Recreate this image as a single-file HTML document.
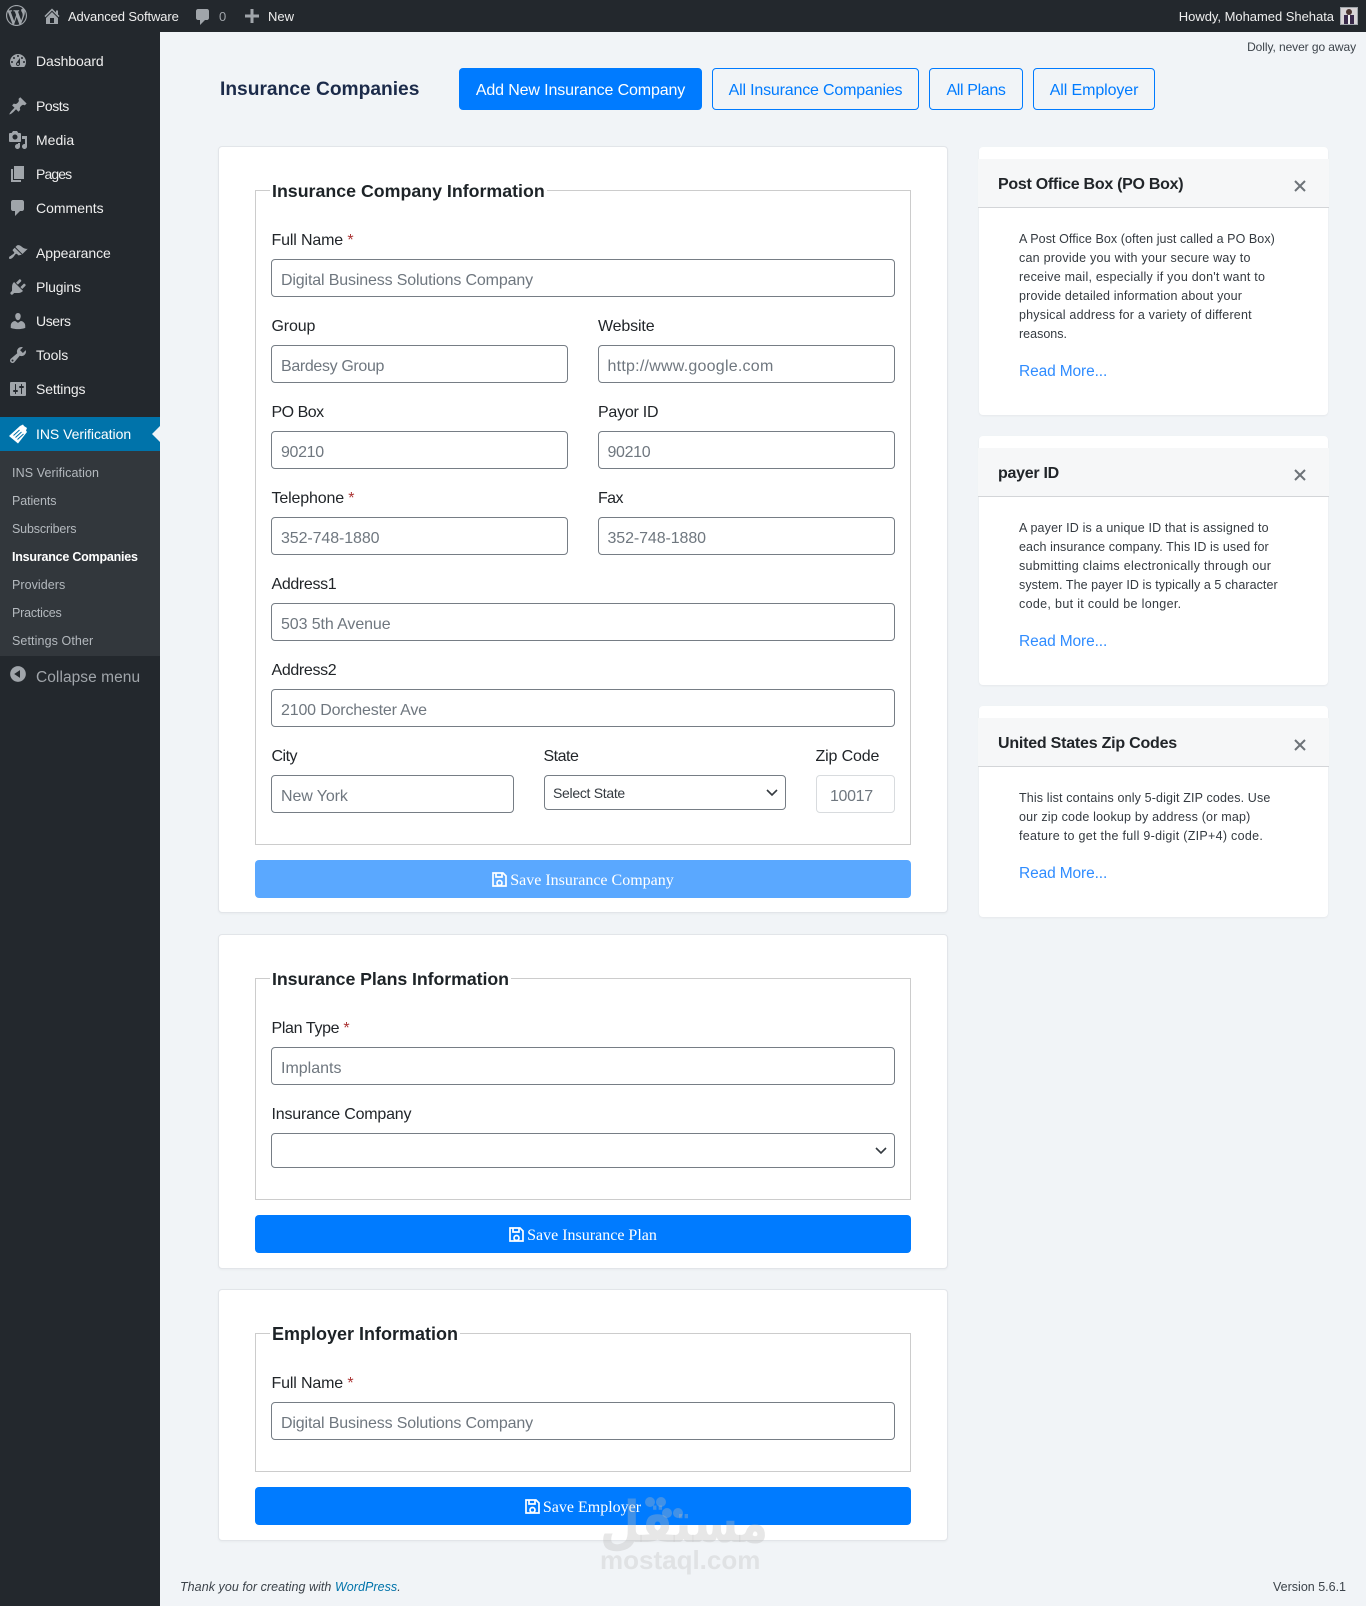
<!DOCTYPE html>
<html lang="en"><head><meta charset="utf-8"><title>Insurance Companies</title>
<style>
html,body{margin:0;padding:0}
body{width:1366px;height:1606px;position:relative;overflow:hidden;background:#f1f4f7;font-family:"Liberation Sans",sans-serif;color:#212529}
.a{position:absolute}
.t{position:absolute;white-space:nowrap;line-height:20px;height:20px}
.ic{position:absolute;fill:#a0a5aa}
.m{color:#eee;font-size:14px;left:36px}
.s{color:#b4b9be;font-size:12.5px;left:12px;letter-spacing:.05px}
.card{position:absolute;background:#fff;border:1px solid #e2e5e9;border-radius:4px;box-sizing:border-box;box-shadow:0 1px 2px rgba(0,0,0,.04)}
.fs{position:absolute;border:1px solid #ccc;box-sizing:border-box;left:255px;width:656px}
.lg{font-weight:bold;font-size:17.8px;color:#1d2327;background:#fff;padding:0 2px;left:270px;margin-top:1px}
.l{font-size:16px;color:#212529;margin-top:2px;margin-left:-.5px;letter-spacing:-.15px}
.i{position:absolute;box-sizing:border-box;height:38px;border:1px solid #767d85;border-radius:4px;background:#fff;color:#6f777f;font-size:16px;line-height:41px;padding-left:9px;white-space:nowrap;letter-spacing:-.15px}
.r{color:#a33}
.b{position:absolute;box-sizing:border-box;left:255px;width:656px;height:38px;background:#007bff;border-radius:4px;color:#fff;font:16px/41px "Liberation Serif",serif;text-align:center}
.b svg{vertical-align:-2px;fill:none;stroke:#fff;margin-right:3px}
.ob{position:absolute;box-sizing:border-box;height:42px;top:68px;border:1px solid #007bff;border-radius:4px;color:#007bff;font-size:16px;line-height:43px;text-align:center;white-space:nowrap}
.side{position:absolute;left:979px;width:349px;background:#fff;border-radius:4px;box-shadow:0 1px 2px rgba(0,0,0,.05)}
.hd{position:absolute;left:-1px;width:351px;background:#f6f7f8;border-bottom:1px solid #d3d5d8;box-sizing:border-box}
.h{font-weight:bold;font-size:16px;color:#212529;left:998px;margin-top:1px;letter-spacing:-.28px}
.p{font-size:12.5px;color:#343a40;left:1019px}
.rm{font-size:15.5px;color:#2f8cff;left:1019px;margin-top:1px;letter-spacing:-.12px}
.x{position:absolute;left:1294px;width:12px;height:12px;stroke:#6d7378;stroke-width:2;fill:none}
</style></head><body>

<!-- admin bar -->
<div class="a" style="left:0;top:0;width:1366px;height:32px;background:#23282d"></div>
<svg class="ic" style="left:6px;top:5px" width="21" height="21" viewBox="0 0 20 20"><path d="M20 10c0-5.51-4.49-10-10-10C4.48 0 0 4.49 0 10c0 5.52 4.48 10 10 10 5.51 0 10-4.48 10-10zM7.78 15.37L4.37 6.22c.55-.02 1.17-.08 1.17-.08.5-.06.44-1.13-.06-1.11 0 0-1.45.11-2.37.11-.18 0-.37 0-.58-.01C4.12 2.69 6.87 1.11 10 1.11c2.33 0 4.45.87 6.05 2.34-.68-.11-1.65.39-1.65 1.58 0 .74.45 1.36.9 2.1.35.61.55 1.36.55 2.46 0 1.49-1.4 5-1.4 5l-3.03-8.37c.54-.02.82-.17.82-.17.5-.05.44-1.25-.06-1.22 0 0-1.44.12-2.38.12-.87 0-2.33-.12-2.33-.12-.5-.03-.56 1.2-.06 1.22l.92.08 1.26 3.41zM17.41 10c.24-.64.74-1.87.43-4.25.7 1.29 1.05 2.71 1.05 4.25 0 3.29-1.73 6.24-4.4 7.78.97-2.59 1.94-5.2 2.92-7.78zM6.1 18.09C3.12 16.65 1.11 13.53 1.11 10c0-1.3.23-2.48.72-3.59C3.25 10.3 4.67 14.2 6.1 18.09zm4.03-6.63l2.58 6.98c-.86.29-1.76.45-2.71.45-.79 0-1.57-.11-2.29-.33.81-2.38 1.62-4.74 2.42-7.1z"/></svg>
<svg class="ic" style="left:42px;top:6px" width="20" height="20" viewBox="0 0 20 20"><path d="M16 8.5l1.53 1.53-1.06 1.06L10 4.62l-6.47 6.47-1.06-1.06L10 2.5l4 4v-2h2v4zm-6-2.46l6 5.99V18H4v-5.97zM12 17v-5H8v5h4z"/></svg>
<div class="t" style="left:68px;top:7px;font-size:13px;color:#eee;letter-spacing:-.12px">Advanced Software</div>
<svg class="ic" style="left:193px;top:7px" width="20" height="20" viewBox="0 0 20 20"><path d="M5 2h9c1.1 0 2 .9 2 2v7c0 1.1-.9 2-2 2h-2l-5 5v-5H5c-1.1 0-2-.9-2-2V4c0-1.1.9-2 2-2z"/></svg>
<div class="t" style="left:219px;top:7px;font-size:13px;color:#a0a5aa">0</div>
<svg class="ic" style="left:242px;top:6px" width="20" height="20" viewBox="0 0 20 20"><path d="M17 8.5v3h-5.5V17h-3v-5.5H3v-3h5.5V3h3v5.5z"/></svg>
<div class="t" style="left:268px;top:7px;font-size:13px;color:#eee">New</div>
<div class="t" style="right:32px;top:7px;font-size:13px;color:#eee;letter-spacing:-.03px">Howdy, Mohamed Shehata</div>
<div class="a" style="left:1340px;top:7px;width:16px;height:16px;border:1px solid #a0a5aa;background:#d8d4d6"><div class="a" style="left:5px;top:1px;width:6px;height:6px;background:#4a3530;border-radius:3px"></div><div class="a" style="left:3px;top:7px;width:10px;height:9px;background:#3a2a4a"></div><div class="a" style="left:7px;top:7px;width:2px;height:9px;background:#eee"></div></div>

<!-- sidebar -->
<div class="a" style="left:0;top:32px;width:160px;height:1574px;background:#23282d"></div>
<svg class="ic" style="left:8px;top:51px" width="20" height="20" viewBox="0 0 20 20"><path d="M3.76 16h12.48c1.1-1.37 1.76-3.11 1.76-5 0-4.42-3.58-8-8-8s-8 3.58-8 8c0 1.89.66 3.63 1.76 5zM10 4c.55 0 1 .45 1 1s-.45 1-1 1-1-.45-1-1 .45-1 1-1zM6 6c.55 0 1 .45 1 1s-.45 1-1 1-1-.45-1-1 .45-1 1-1zm8 0c.55 0 1 .45 1 1s-.45 1-1 1-1-.45-1-1 .45-1 1-1zm-5.37 5.55L12 7v6c0 1.1-.9 2-2 2s-2-.9-2-2c0-.57.24-1.08.63-1.45zM4 10c.55 0 1 .45 1 1s-.45 1-1 1-1-.45-1-1 .45-1 1-1zm12 0c.55 0 1 .45 1 1s-.45 1-1 1-1-.45-1-1 .45-1 1-1zm-5 3c0-.55-.45-1-1-1s-1 .45-1 1 .45 1 1 1 1-.45 1-1z"/></svg>
<div class="t m" style="top:51px;letter-spacing:-.1px">Dashboard</div>
<svg class="ic" style="left:8px;top:96px" width="20" height="20" viewBox="0 0 20 20"><path d="M10.44 3.02l1.82-1.82 6.36 6.35-1.83 1.82c-1.05-.68-2.48-.57-3.41.36l-.75.75c-.92.93-1.04 2.35-.35 3.41l-1.83 1.82-2.41-2.41-2.8 2.79c-.42.42-3.38 2.71-3.8 2.29s1.86-3.39 2.28-3.81l2.79-2.79L4.1 9.36l1.83-1.82c1.05.69 2.48.57 3.4-.36l.75-.75c.93-.92 1.05-2.35.36-3.41z"/></svg>
<div class="t m" style="top:96px;letter-spacing:-.45px">Posts</div>
<svg class="ic" style="left:8px;top:130px" width="20" height="20" viewBox="0 0 20 20"><path d="M13 11V4c0-.55-.45-1-1-1h-1.67L9 1H5L3.67 3H2c-.55 0-1 .45-1 1v7c0 .55.45 1 1 1h10c.55 0 1-.45 1-1zM7 4.5c1.38 0 2.5 1.12 2.5 2.5S8.38 9.5 7 9.5 4.5 8.38 4.5 7 5.62 4.5 7 4.5zM14 6h5v10.5c0 1.38-1.12 2.5-2.5 2.5S14 17.88 14 16.5s1.12-2.5 2.5-2.5c.17 0 .34.02.5.05V9h-3V6zm-4 8.05V13h2v3.5c0 1.38-1.12 2.5-2.5 2.5S7 17.88 7 16.5 8.12 14 9.5 14c.17 0 .34.02.5.05z"/></svg>
<div class="t m" style="top:130px">Media</div>
<svg class="ic" style="left:8px;top:164px" width="20" height="20" viewBox="0 0 20 20"><path d="M6 15V2h10v13H6zm-1 1h8v2H3V5h2v11z"/></svg>
<div class="t m" style="top:164px;letter-spacing:-.9px">Pages</div>
<svg class="ic" style="left:8px;top:198px" width="20" height="20" viewBox="0 0 20 20"><path d="M5 2h9c1.1 0 2 .9 2 2v7c0 1.1-.9 2-2 2h-2l-5 5v-5H5c-1.1 0-2-.9-2-2V4c0-1.1.9-2 2-2z"/></svg>
<div class="t m" style="top:198px">Comments</div>
<svg class="ic" style="left:8px;top:243px" width="20" height="20" viewBox="0 0 20 20"><path d="M14.48 11.06L7.41 3.99l1.5-1.5c.5-.56 2.3-.47 3.51.32 1.21.8 1.43 1.28 2.91 2.1 1.18.64 2.45 1.26 4.45.85zm-.71.71L6.7 4.7 4.93 6.47c-.39.39-.39 1.02 0 1.41l1.06 1.06c.39.39.39 1.03 0 1.42-.6.6-1.43 1.11-2.21 1.69-.35.26-.7.53-1.01.84C1.43 13.23 1 14.32 1 15c0 .55.45 1 1 1 .68 0 1.77-.43 3.12-1.77.31-.31.58-.66.84-1.01.58-.78 1.09-1.61 1.69-2.21.39-.39 1.02-.39 1.41 0l1.06 1.06c.39.39 1.02.39 1.41 0z"/></svg>
<div class="t m" style="top:243px;letter-spacing:-.08px">Appearance</div>
<svg class="ic" style="left:8px;top:277px" width="20" height="20" viewBox="0 0 20 20"><path d="M13.11 4.36L9.87 7.6 8 5.73l3.24-3.24c.35-.34 1.05-.2 1.56.32.52.51.66 1.21.31 1.55zm-8 1.77l.91-1.12 9.01 9.01-1.19.84c-.71.71-2.63 1.16-3.82 1.16H6.14L4.9 17.26c-.59.59-1.54.59-2.12 0-.59-.58-.59-1.53 0-2.12l1.24-1.24v-3.88c0-1.13.4-3.19 1.09-3.89zm7.26 3.97l3.24-3.24c.34-.35 1.04-.21 1.55.31.52.51.66 1.21.31 1.55l-3.24 3.25z"/></svg>
<div class="t m" style="top:277px;letter-spacing:-.15px">Plugins</div>
<svg class="ic" style="left:8px;top:311px" width="20" height="20" viewBox="0 0 20 20"><path d="M10 9.25c-2.27 0-2.73-3.44-2.73-3.44C7 4.02 7.82 2 9.97 2c2.16 0 2.98 2.02 2.71 3.81 0 0-.41 3.44-2.68 3.44zm0 2.57L12.72 10c2.39 0 4.52 2.33 4.52 4.53v2.49s-3.65 1.13-7.24 1.13c-3.65 0-7.24-1.13-7.24-1.13v-2.49c0-2.25 1.94-4.48 4.47-4.48z"/></svg>
<div class="t m" style="top:311px;letter-spacing:-.4px">Users</div>
<svg class="ic" style="left:8px;top:345px" width="20" height="20" viewBox="0 0 20 20"><path d="M16.68 9.77c-1.34 1.34-3.3 1.67-4.95.99l-5.41 6.52c-.99.99-2.59.99-3.58 0s-.99-2.59 0-3.57l6.52-5.42c-.68-1.65-.35-3.61.99-4.95 1.28-1.28 3.12-1.62 4.72-1.06l-2.89 2.89 2.82 2.82 2.86-2.87c.53 1.58.18 3.39-1.08 4.65zM3.81 16.21c.4.39 1.04.39 1.43 0 .4-.4.4-1.04 0-1.43-.39-.4-1.03-.4-1.43 0-.39.39-.39 1.03 0 1.43z"/></svg>
<div class="t m" style="top:345px;letter-spacing:-.1px">Tools</div>
<svg class="ic" style="left:8px;top:379px" width="20" height="20" viewBox="0 0 20 20"><path d="M18 16V4c0-.55-.45-1-1-1H3c-.55 0-1 .45-1 1v12c0 .55.45 1 1 1h14c.55 0 1-.45 1-1zM8 11h1c.55 0 1 .45 1 1s-.45 1-1 1H8v1.5c0 .28-.22.5-.5.5s-.5-.22-.5-.5V13H6c-.55 0-1-.45-1-1s.45-1 1-1h1V5.5c0-.28.22-.5.5-.5s.5.22.5.5V11zm5-2h-1c-.55 0-1-.45-1-1s.45-1 1-1h1V5.5c0-.28.22-.5.5-.5s.5.22.5.5V7h1c.55 0 1 .45 1 1s-.45 1-1 1h-1v5.5c0 .28-.22.5-.5.5s-.5-.22-.5-.5V9z"/></svg>
<div class="t m" style="top:379px;letter-spacing:-.15px">Settings</div>

<div class="a" style="left:0;top:417px;width:160px;height:34px;background:#0073aa"></div>
<svg class="a" style="left:152px;top:426px" width="8" height="16" viewBox="0 0 8 16"><path d="M8 0L0 8l8 8z" fill="#f1f4f7"/></svg>
<svg class="a" style="left:8px;top:424px" width="21" height="21" viewBox="0 0 21 21"><path d="M1 12L12 2l3-1.5 1 1.5 3 2-1 2.500 1 1.500L10 19.500z" fill="#fff"/><path d="M5.500 11.500l6-5.500M7.500 13.500l6-5.500M9.500 15.500l6-5.500" stroke="#0073aa" stroke-width="1" fill="none"/></svg>
<div class="t" style="left:36px;top:424px;font-size:14px;color:#fff;letter-spacing:-.04px">INS Verification</div>
<div class="a" style="left:0;top:451px;width:160px;height:205px;background:#32373c"></div>
<div class="t s" style="top:463px;letter-spacing:.1px">INS Verification</div>
<div class="t s" style="top:491px;letter-spacing:-.1px">Patients</div>
<div class="t s" style="top:519px;letter-spacing:-.15px">Subscribers</div>
<div class="t s" style="top:547px;color:#fff;font-weight:bold;letter-spacing:-.22px">Insurance Companies</div>
<div class="t s" style="top:575px">Providers</div>
<div class="t s" style="top:603px;letter-spacing:-.2px">Practices</div>
<div class="t s" style="top:631px;letter-spacing:.1px">Settings Other</div>
<svg class="ic" style="left:8px;top:664px" width="20" height="20" viewBox="0 0 20 20"><path d="M10 2.16c4.33 0 7.84 3.51 7.84 7.84s-3.51 7.84-7.84 7.84S2.16 14.33 2.16 10 5.71 2.16 10 2.16zm2 11.72V6.12L6.18 9.97z"/></svg>
<div class="t" style="left:36px;top:668px;font-size:15.5px;color:#a0a5aa;letter-spacing:.06px">Collapse menu</div>

<!-- header -->
<div class="t" style="right:10px;top:37px;font-size:12px;color:#3c434a;letter-spacing:-.08px">Dolly, never go away</div>
<div class="t" style="left:220px;top:80px;font-size:19.2px;font-weight:bold;color:#1c2b4a">Insurance Companies</div>
<div class="ob" style="left:459px;width:243px;background:#007bff;color:#fff;letter-spacing:-.13px">Add New Insurance Company</div>
<div class="ob" style="left:712px;width:207px;letter-spacing:-.18px">All Insurance Companies</div>
<div class="ob" style="left:929px;width:94px;letter-spacing:-.35px">All Plans</div>
<div class="ob" style="left:1033px;width:122px;letter-spacing:-.1px">All Employer</div>

<!-- card 1 -->
<div class="card" style="left:218px;top:146px;width:730px;height:767px"></div>
<div class="fs" style="top:190px;height:655px"></div>
<div class="t lg" style="top:180px">Insurance Company Information</div>
<div class="t l" style="left:272px;top:229px">Full Name <span class="r">*</span></div>
<div class="i" style="left:271px;top:259px;width:624px">Digital Business Solutions Company</div>
<div class="t l" style="left:272px;top:315px">Group</div>
<div class="i" style="left:271px;top:345px;width:297px;letter-spacing:-.35px">Bardesy Group</div>
<div class="t l" style="left:598.500px;top:315px">Website</div>
<div class="i" style="left:598px;top:345px;width:297px;letter-spacing:.24px;padding-left:8.500px">http://www.google.com</div>
<div class="t l" style="left:272px;top:401px;letter-spacing:-.5px">PO Box</div>
<div class="i" style="left:271px;top:431px;width:297px;letter-spacing:-.35px">90210</div>
<div class="t l" style="left:598.500px;top:401px;letter-spacing:-.25px">Payor ID</div>
<div class="i" style="left:598px;top:431px;width:297px;letter-spacing:-.35px;padding-left:8.500px">90210</div>
<div class="t l" style="left:272px;top:487px">Telephone <span class="r">*</span></div>
<div class="i" style="left:271px;top:517px;width:297px;letter-spacing:-.1px">352-748-1880</div>
<div class="t l" style="left:598.500px;top:487px;letter-spacing:-.6px">Fax</div>
<div class="i" style="left:598px;top:517px;width:297px;letter-spacing:-.1px;padding-left:8.500px">352-748-1880</div>
<div class="t l" style="left:272px;top:573px;letter-spacing:-.35px">Address1</div>
<div class="i" style="left:271px;top:603px;width:624px;letter-spacing:-.1px">503 5th Avenue</div>
<div class="t l" style="left:272px;top:659px;letter-spacing:-.35px">Address2</div>
<div class="i" style="left:271px;top:689px;width:624px;letter-spacing:-.17px">2100 Dorchester Ave</div>
<div class="t l" style="left:272px;top:745px;letter-spacing:-.5px">City</div>
<div class="i" style="left:271px;top:775px;width:243px;letter-spacing:-.1px">New York</div>
<div class="t l" style="left:544px;top:745px;letter-spacing:-.5px">State</div>
<div class="i" style="left:544px;top:775px;width:242px;height:35px;font-size:14px;line-height:35px;color:#343a40;padding-left:8px;letter-spacing:-.3px">Select State<svg class="a" style="left:221px;top:12px" width="12" height="9" viewBox="0 0 12 9"><path d="M1 2l5 5 5-5" fill="none" stroke="#343a40" stroke-width="1.6"/></svg></div>
<div class="t l" style="left:816px;top:745px">Zip Code</div>
<div class="i" style="left:816px;top:775px;width:79px;border-color:#d8dbde;padding-left:13px;letter-spacing:-.35px">10017</div>
<div class="b" style="top:860px;background:#5aa8ff"><svg width="15" height="15" viewBox="0 0 15 15" stroke-width="1.7"><path d="M1 1h10l3 3v10H1z"/><path d="M4 1v4h6V1M5 11a2.4 2.4 0 1 0 5 0a2.4 2.4 0 1 0-5 0"/></svg>Save Insurance Company</div>

<!-- card 2 -->
<div class="card" style="left:218px;top:934px;width:730px;height:335px"></div>
<div class="fs" style="top:978px;height:222px"></div>
<div class="t lg" style="top:968px;letter-spacing:-.08px">Insurance Plans Information</div>
<div class="t l" style="left:272px;top:1017px;letter-spacing:-.35px">Plan Type <span class="r">*</span></div>
<div class="i" style="left:271px;top:1047px;width:624px;letter-spacing:0">Implants</div>
<div class="t l" style="left:272px;top:1103px;letter-spacing:-.2px">Insurance Company</div>
<div class="i" style="left:271px;top:1133px;width:624px;height:35px"><svg class="a" style="left:603px;top:12px" width="12" height="9" viewBox="0 0 12 9"><path d="M1 2l5 5 5-5" fill="none" stroke="#343a40" stroke-width="1.6"/></svg></div>
<div class="b" style="top:1215px"><svg width="15" height="15" viewBox="0 0 15 15" stroke-width="1.7"><path d="M1 1h10l3 3v10H1z"/><path d="M4 1v4h6V1M5 11a2.4 2.4 0 1 0 5 0a2.4 2.4 0 1 0-5 0"/></svg>Save Insurance Plan</div>

<!-- card 3 -->
<div class="card" style="left:218px;top:1289px;width:730px;height:252px"></div>
<div class="fs" style="top:1333px;height:139px"></div>
<div class="t lg" style="top:1323px;font-size:18px;letter-spacing:0">Employer Information</div>
<div class="t l" style="left:272px;top:1372px">Full Name <span class="r">*</span></div>
<div class="i" style="left:271px;top:1402px;width:624px">Digital Business Solutions Company</div>
<div class="b" style="top:1487px"><svg width="15" height="15" viewBox="0 0 15 15" stroke-width="1.7"><path d="M1 1h10l3 3v10H1z"/><path d="M4 1v4h6V1M5 11a2.4 2.4 0 1 0 5 0a2.4 2.4 0 1 0-5 0"/></svg>Save Employer</div>

<!-- side cards -->
<div class="side" style="top:147px;height:268px"><div class="hd" style="top:12px;height:49px"></div></div>
<div class="t h" style="top:174px">Post Office Box (PO Box)</div>
<svg class="x" style="top:180px" viewBox="0 0 12 12"><path d="M1 1l10 10M11 1L1 11"/></svg>
<div class="t p" style="top:229px;letter-spacing:.07px">A Post Office Box (often just called a PO Box)</div>
<div class="t p" style="top:248px;letter-spacing:.24px">can provide you with your secure way to</div>
<div class="t p" style="top:267px;letter-spacing:.23px">receive mail, especially if you don't want to</div>
<div class="t p" style="top:286px;letter-spacing:.18px">provide detailed information about your</div>
<div class="t p" style="top:305px;letter-spacing:.2px">physical address for a variety of different</div>
<div class="t p" style="top:324px">reasons.</div>
<div class="t rm" style="top:361px">Read More...</div>

<div class="side" style="top:436px;height:249px"><div class="hd" style="top:12px;height:49px"></div></div>
<div class="t h" style="top:463px">payer ID</div>
<svg class="x" style="top:469px" viewBox="0 0 12 12"><path d="M1 1l10 10M11 1L1 11"/></svg>
<div class="t p" style="top:518px;letter-spacing:.16px">A payer ID is a unique ID that is assigned to</div>
<div class="t p" style="top:537px;letter-spacing:.1px">each insurance company. This ID is used for</div>
<div class="t p" style="top:556px;letter-spacing:.3px">submitting claims electronically through our</div>
<div class="t p" style="top:575px;letter-spacing:.07px">system. The payer ID is typically a 5 character</div>
<div class="t p" style="top:594px;letter-spacing:.33px">code, but it could be longer.</div>
<div class="t rm" style="top:631px">Read More...</div>

<div class="side" style="top:706px;height:211px"><div class="hd" style="top:12px;height:49px"></div></div>
<div class="t h" style="top:733px;letter-spacing:-.22px">United States Zip Codes</div>
<svg class="x" style="top:739px" viewBox="0 0 12 12"><path d="M1 1l10 10M11 1L1 11"/></svg>
<div class="t p" style="top:788px;letter-spacing:.14px">This list contains only 5-digit ZIP codes. Use</div>
<div class="t p" style="top:807px;letter-spacing:.2px">our zip code lookup by address (or map)</div>
<div class="t p" style="top:826px;letter-spacing:.29px">feature to get the full 9-digit (ZIP+4) code.</div>
<div class="t rm" style="top:863px">Read More...</div>

<!-- footer -->
<div class="t" style="left:180px;top:1577px;font-size:12.5px;font-style:italic;color:#3c434a;letter-spacing:.05px">Thank you for creating with <span style="color:#0073aa">WordPress</span>.</div>
<div class="t" style="right:20px;top:1577px;font-size:12.5px;color:#3c434a">Version 5.6.1</div>

<!-- watermark -->
<div class="t" style="left:600px;top:1497px;width:166px;height:50px;line-height:50px;text-align:center;font-family:'DejaVu Sans',sans-serif;font-weight:bold;font-size:46px;color:rgba(185,185,185,.35);transform:scaleY(1.25)">مستقل</div>
<svg class="a" style="left:640px;top:1494px" width="70" height="30" viewBox="0 0 70 30"><g fill="rgba(185,185,185,.35)"><circle cx="10" cy="8" r="5"/><circle cx="21" cy="8" r="5"/><circle cx="27" cy="19" r="5"/><circle cx="38" cy="19" r="5"/></g></svg>
<div class="t" style="left:600px;top:1547px;font-size:26px;line-height:26px;height:26px;font-weight:bold;color:rgba(185,185,185,.3)">mostaql.com</div>
</body></html>
